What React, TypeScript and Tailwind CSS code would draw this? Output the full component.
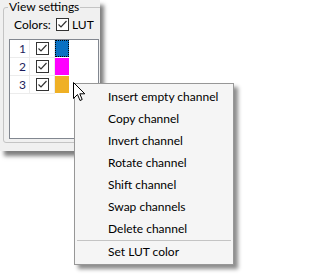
import React from "react";

const rows = [
  { n: 1, swatch: "bg-[#0870c2] border border-dotted border-black" },
  { n: 2, swatch: "bg-[#ff00ff]" },
  { n: 3, swatch: "bg-[#efb025]" },
];

const menuItems = [
  "Insert empty channel",
  "Copy channel",
  "Invert channel",
  "Rotate channel",
  "Shift channel",
  "Swap channels",
  "Delete channel",
];

function CheckBox() {
  return (
    <div className="w-[13px] h-[13px] shrink-0 border border-[#333] bg-white flex items-center justify-center">
      <svg width="11" height="11" viewBox="0 0 11 11">
        <path d="M1.5 5.5 L4 8 L9.5 2" fill="none" stroke="#333" strokeWidth="1.2" />
      </svg>
    </div>
  );
}

function Cursor() {
  return (
    <svg
      className="absolute left-[73px] top-[82px]"
      width="13"
      height="20"
      viewBox="0 0 13 20"
    >
      <path
        d="M0.5 0.5 L0.5 16.5 L4.5 12.5 L7 18.5 L9.2 17.5 L6.8 11.8 L11.8 11.8 Z"
        fill="white"
        stroke="black"
        strokeWidth="1"
      />
    </svg>
  );
}

export default function App() {
  return (
    <div className="relative w-[246px] h-[277px] overflow-hidden bg-white text-[12px] text-black font-['Lato',sans-serif]">
      {/* view settings panel */}
      <div className="w-[100px] h-[151px] bg-[#f0f0f0] overflow-hidden shadow-[4px_5px_4px_rgba(0,0,0,0.5)]">
        <fieldset className="ml-[3px] w-[110px] h-[143px] border border-[#c4c4c4] rounded-[3px]">
          <legend className="ml-[4px] px-[1px] leading-[14px]">View settings</legend>

          <div className="ml-[10px] mt-[3px] h-[15px] flex items-center">
            <span className="w-[42px] whitespace-nowrap">Colors:</span>
            <CheckBox />
            <span className="ml-[3px]">LUT</span>
          </div>

          <div className="ml-[5px] mt-[7px] w-[90px] h-[100px] bg-white border border-[#828790]">
            {rows.map((r) => (
              <div key={r.n} className="flex h-[18px]">
                <div className="w-[20px] border-r border-b border-[#ececec] text-right pr-[3px] leading-[17px] text-[#1c1c5c]">
                  {r.n}
                </div>
                <div className="w-[25px] border-r border-b border-[#ececec] flex items-center justify-center">
                  <CheckBox />
                </div>
                <div className={`w-[14px] h-[17px] ${r.swatch}`} />
              </div>
            ))}
          </div>
        </fieldset>
      </div>

      {/* context menu */}
      <div className="absolute left-[74px] top-[83px] w-[160px] bg-[#f5f5f5] border border-[#979797] pt-[2px] pb-[1px] shadow-[4px_4px_4px_rgba(0,0,0,0.45)]">
        {menuItems.map((item) => (
          <div key={item} className="h-[22px] flex items-center pl-[33px]">
            {item}
          </div>
        ))}
        <div className="mx-[2px] h-px bg-[#c4c4c4]" />
        <div className="h-[22px] flex items-center pl-[33px]">Set LUT color</div>
      </div>

      <Cursor />
    </div>
  );
}
